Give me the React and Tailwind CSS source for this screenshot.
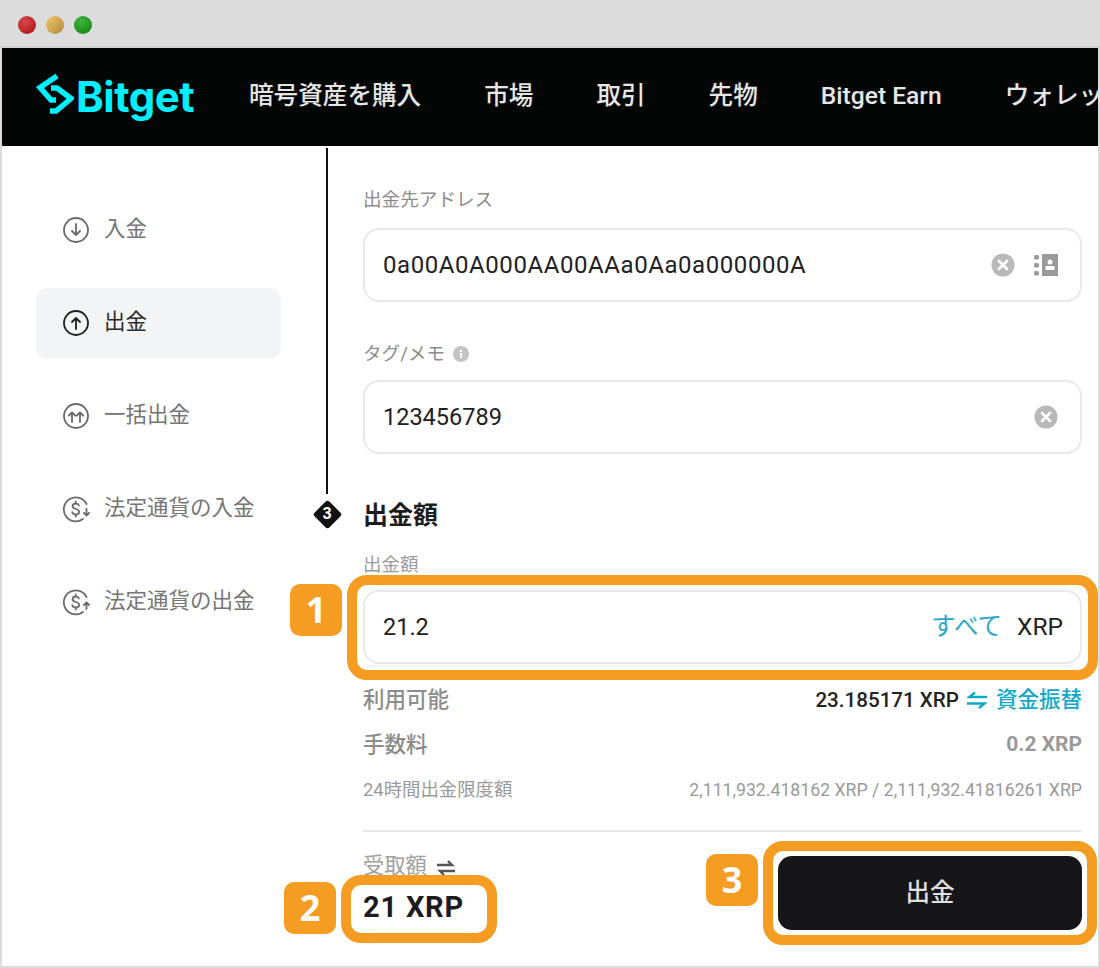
const navItems = ['暗号資産を購入', '市場', '取引', '先物', 'Bitget Earn', 'ウォレット']

function CircleArrow({ dark, double }) {
  const color = dark ? '#1f1f1f' : '#6a6a6a'
  return (
    <svg width="28" height="28" viewBox="0 0 28 28" fill="none" stroke={color} strokeWidth="1.8" strokeLinecap="round" strokeLinejoin="round">
      <circle cx="14" cy="14" r="12" />
      {double ? (
        <>
          <path d="M10 20v-9M6.8 13.5 10 10.3l3.2 3.2M18 20v-9M14.8 13.5l3.2-3.2 3.2 3.2" />
        </>
      ) : dark ? (
        <path d="M14 20v-11M10 13l4-4 4 4" />
      ) : (
        <path d="M14 8v11M10 15l4 4 4-4" />
      )}
    </svg>
  )
}

function DollarCycle({ up }) {
  return (
    <svg width="28" height="28" viewBox="0 0 28 28" fill="none" stroke="#6a6a6a" strokeWidth="1.8" strokeLinecap="round" strokeLinejoin="round">
      <path d="M24.500 9A12 12 0 1 0 21 24" />
      <path d="M17 10.500c-.6-1.500-1.800-2-3.200-2-1.800 0-3.200 1-3.200 2.700 0 3.600 6.600 2 6.600 5.500 0 1.800-1.500 2.800-3.400 2.800-1.500 0-2.900-.7-3.500-2.200M13.800 6.500v2M13.800 19.500v2" strokeWidth="1.800" />
      {up ? <path d="M24.500 21v-6.500M22 17l2.500-2.500L27 17" /> : <path d="M24.500 14v6.500M22 18l2.500 2.500L27 18" />}
    </svg>
  )
}

function ClearIcon({ className }) {
  return (
    <svg className={className} width="24" height="24" viewBox="0 0 24 24">
      <circle cx="12" cy="12" r="11.500" fill="#b9b9bb" />
      <path d="M8 8l8 8M16 8l-8 8" stroke="#fff" strokeWidth="2.600" strokeLinecap="round" />
    </svg>
  )
}

function SideItem({ label, icon, active }) {
  return (
    <div className={`flex items-center h-[71px] rounded-xl pl-[26px] pb-[2px] gap-[14px] text-[21.500px] ${active ? 'bg-[#f3f4f6] text-[#2a2a2a]' : 'text-[#757575]'}`}>
      {icon}
      <span>{label}</span>
    </div>
  )
}

function Field({ children }) {
  return (
    <div className="flex items-center justify-between h-[74px] rounded-2xl border-2 border-[#e9e9ea] bg-white pl-[18px] pr-[24px] text-[23.500px] text-[#202124]">
      {children}
    </div>
  )
}

function Badge({ className, children }) {
  return (
    <div className={`absolute w-[52px] h-[52px] rounded-[10px] bg-[#f59c23] flex items-center justify-center text-white text-[36px] font-bold font-['Noto_Sans'] ${className}`}>
      {children}
    </div>
  )
}

export default function App() {
  return (
    <div className="relative w-[1100px] h-[968px] overflow-hidden bg-white font-['Roboto','Noto_Sans_CJK_JP',sans-serif]">
      <div className="flex flex-col h-full rounded-t-[12px] border-x-2 border-b-2 border-[#dcdcdc]">
        {/* window bar */}
        <div className="flex items-center gap-[10px] h-[42px] shrink-0 bg-[#dcdcdc] pl-[18px] pt-[4px] border-b-2 border-[#d0d0d0] box-content -mx-[2px]">
          <span className="w-[18px] h-[18px] rounded-full bg-[radial-gradient(circle_at_40%_30%,#d8474c,#a80f12)]" />
          <span className="w-[18px] h-[18px] rounded-full bg-[linear-gradient(135deg,#f2c66c,#b08a3c)]" />
          <span className="w-[18px] h-[18px] rounded-full bg-[radial-gradient(circle_at_40%_30%,#3fb53f,#0b800b)]" />
        </div>

        {/* nav */}
        <div className="flex items-center h-[98px] shrink-0 bg-[#040606] pl-[32px] overflow-hidden whitespace-nowrap">
          <svg width="40" height="44" viewBox="0 0 40 44" fill="none" stroke="#00f0ff" strokeWidth="5.500" strokeLinejoin="miter" className="shrink-0 -mt-[6px]">
            <path d="M23 4 6 15.500 17 28h5" />
            <path d="M17 16h6L37 26.500 22 39h-6" />
          </svg>
          <span className="ml-[2px] text-[42px] leading-none font-bold text-[#00f0ff] tracking-[-0.5px] font-['Inter'] w-[173px] shrink-0">Bitget</span>
          <div className="flex items-center gap-[63px] text-[24.600px] font-medium text-[#e6e6e6] -mt-[2px]">
            {navItems.map(item => (
              <span key={item}>{item}</span>
            ))}
          </div>
        </div>

        <div className="flex flex-1 min-h-0">
          {/* sidebar */}
          <div className="w-[279px] shrink-0 pt-[49px] pl-[34px] flex flex-col gap-[22px]">
            <SideItem label="入金" icon={<CircleArrow />} />
            <SideItem label="出金" icon={<CircleArrow dark />} active />
            <SideItem label="一括出金" icon={<CircleArrow double />} />
            <SideItem label="法定通貨の入金" icon={<DollarCycle />} />
            <SideItem label="法定通貨の出金" icon={<DollarCycle up />} />
          </div>

          {/* stepper */}
          <div className="w-[82px] shrink-0 flex flex-col pl-[45px] pt-[2px]">
            <div className="w-[2px] h-[346px] bg-[#111]" />
            <div className="relative mt-[6px] -ml-[13px] w-[28px] h-[28px] flex items-center justify-center">
              <div className="absolute w-[21px] h-[21px] rotate-45 rounded-[3px] bg-[#111]" />
              <span className="relative text-white text-[16px] font-bold">3</span>
            </div>
          </div>

          {/* form */}
          <div className="w-[719px] shrink-0 flex flex-col">
            <div className="h-[82px] pt-[41px] text-[18.600px] leading-[26px] text-[#8c8c8c]">出金先アドレス</div>
            <Field>
              <span className="text-[24px] tracking-[0.57px]">0a00A0A000AA00AAa0Aa0a000000A</span>
              <div className="flex items-center gap-[19px] -mr-[2px]">
                <ClearIcon />
                <svg width="24" height="24" viewBox="0 0 24 24">
                  <rect x="8" y="1" width="16" height="22" fill="#9a9a9c" />
                  <rect x="0" y="2" width="5" height="4.500" rx="1.500" fill="#9a9a9c" />
                  <rect x="0" y="10" width="5" height="4.500" rx="1.500" fill="#9a9a9c" />
                  <rect x="0" y="18" width="5" height="4.500" rx="1.500" fill="#9a9a9c" />
                  <circle cx="16" cy="9" r="2.500" fill="#fff" />
                  <rect x="11.500" y="13" width="9" height="4" rx="1" fill="#fff" />
                </svg>
              </div>
            </Field>
            <div className="flex items-center gap-[8px] h-[78px] pt-[26px] text-[18.600px] leading-[26px] text-[#8c8c8c]">
              <span>タグ/メモ</span>
              <svg width="16" height="16" viewBox="0 0 16 16">
                <circle cx="8" cy="8" r="8" fill="#c4c4c6" />
                <rect x="7" y="7" width="2" height="5" fill="#fff" />
                <rect x="7" y="4" width="2" height="2" fill="#fff" />
              </svg>
            </div>
            <Field>
              <span className="mt-[2px]">123456789</span>
              <ClearIcon className="-mr-[2px]" />
            </Field>
            <div className="h-[46px] pt-[44px] box-content text-[25px] leading-[36px] font-bold text-[#1c1c1e] -mb-[3px]">出金額</div>
            <div className="h-[49px] pt-[12px] text-[18.500px] leading-[24px] text-[#9a9a9a]">出金額</div>
            <Field>
              <span className="mt-[2px]">21.2</span>
              <span className="flex items-center gap-[15px] text-[24.500px]">
                <span className="text-[#2aa8c9]">すべて</span>
                <span className="text-[#202124] -mr-[7px]">XRP</span>
              </span>
            </Field>
            <div className="flex items-center justify-between h-[46px] mt-[13px] text-[21.500px] font-medium text-[#8c8c8c]">
              <span>利用可能</span>
              <span className="flex items-center gap-[8px]">
                <span className="text-[20.600px] font-medium text-[#222]">23.185171 XRP</span>
                <svg width="20" height="18" viewBox="0 0 20 18" fill="none" stroke="#12a9c9" strokeWidth="2.400">
                  <path d="M20 6H2.500L8 1.500M0 12.500h17.500L12 17" />
                </svg>
                <span className="text-[#12a9c9] ml-[1px]">資金振替</span>
              </span>
            </div>
            <div className="flex items-center justify-between h-[44px] text-[21.500px] font-medium text-[#8c8c8c]">
              <span>手数料</span>
              <span className="text-[21px] font-bold text-[#9a9a9a]">0.2 XRP</span>
            </div>
            <div className="flex items-center justify-between h-[46px] text-[#9a9a9a]">
              <span className="text-[18.400px]">24時間出金限度額</span>
              <span className="text-[17.700px]">2,111,932.418162 XRP / 2,111,932.41816261 XRP</span>
            </div>
            <div className="mt-[17px] border-t-2 border-[#e8e8e8] flex justify-between pt-[24px]">
              <div className="flex items-start gap-[10px] h-[24px] -mt-[3px] text-[21.300px] leading-[26px] text-[#a0a0a0]">
                <span>受取額</span>
                <svg width="18" height="20" viewBox="0 0 18 20" fill="none" stroke="#555" strokeWidth="2.400" className="mt-[5px]">
                  <path d="M0 7h15l-4-4M18 13H3l4 4" />
                </svg>
              </div>
              <button className="w-[304px] h-[74px] rounded-[14px] bg-[#161618] text-[#e0e0e0] text-[24.500px] font-medium flex items-center justify-center">
                出金
              </button>
            </div>
          </div>
        </div>
      </div>

      {/* orange callouts over the form */}
      <div className="absolute left-[347px] top-[575px] w-[751px] h-[105px] rounded-[20px] border-[10px] border-[#f59c23]" />
      <Badge className="left-[290px] top-[584px]">1</Badge>
      <div className="absolute left-[341px] top-[875px] w-[156px] h-[68px] rounded-[20px] border-[10px] border-[#f59c23] bg-white pl-[12px] pb-[2px] flex items-center">
        <span className="text-[29px] tracking-[0.8px] font-bold text-[#1c1c1e] whitespace-nowrap">21 XRP</span>
      </div>
      <Badge className="left-[284px] top-[882px]">2</Badge>
      <div className="absolute left-[763px] top-[841px] w-[334px] h-[104px] rounded-[20px] border-[10px] border-[#f59c23]" />
      <Badge className="left-[706px] top-[854px]">3</Badge>
    </div>
  )
}
